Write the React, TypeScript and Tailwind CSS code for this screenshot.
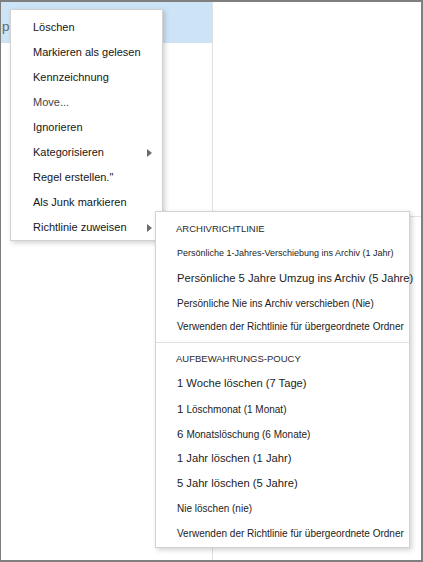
import React from "react";

const Arrow = () => (
  <svg width="5" height="8" viewBox="0 0 5 8" className="block">
    <polygon points="0,0 5,4 0,8" fill="#6b6b6b" />
  </svg>
);

type MainItem = { label: string; arrow?: boolean; muted?: boolean };

const mainItems: MainItem[] = [
  { label: "Löschen" },
  { label: "Markieren als gelesen" },
  { label: "Kennzeichnung" },
  { label: "Move...", muted: true },
  { label: "Ignorieren" },
  { label: "Kategorisieren", arrow: true },
  { label: 'Regel erstellen."' },
  { label: "Als Junk markieren" },
  { label: "Richtlinie zuweisen", arrow: true },
];

export default function App() {
  return (
    <div className="relative w-[423px] h-[562px] bg-white border-t-2 border-l border-r-2 border-b-2 border-[#7f7f7f] flex font-['Liberation_Sans',Arial,sans-serif] overflow-hidden">
      {/* left pane */}
      <div className="w-[212px] h-full border-r border-[#e1e1e1] flex flex-col">
        <div className="h-[41px] bg-[#cde4f7] pl-[1px] pt-[17px]">
          <div className="text-[13.5px] leading-[16px] text-[#666666] whitespace-nowrap">p</div>
        </div>
      </div>
      {/* right pane */}
      <div className="flex-1 h-full flex flex-col">
        <div className="h-[215px] border-b border-[#e3e3e3]" />
      </div>

      {/* main context menu */}
      <div className="absolute left-[9px] top-[7px] w-[153px] h-[232px] bg-white border border-[#d2d2d2] shadow-[2px_2px_5px_rgba(0,0,0,0.18)] pt-[5px]">
        {mainItems.map((it) => (
          <div
            key={it.label}
            className={`h-[25px] flex items-center justify-between pl-[22px] pr-[10px] text-[11px] whitespace-nowrap ${
              it.muted ? "text-[#444444]" : "text-[#161616]"
            }`}
          >
            <span>{it.label}</span>
            {it.arrow ? <Arrow /> : null}
          </div>
        ))}
      </div>

      {/* sub menu */}
      <div className="absolute left-[154px] top-[209px] w-[255px] h-[337px] bg-white border border-[#d2d2d2] shadow-[2px_2px_5px_rgba(0,0,0,0.18)] text-[#1c1c1c] whitespace-nowrap">
        <div className="pt-[5px] pb-[4px]">
          <div className="h-[24px] flex items-center pl-[20px] text-[9.5px] text-[#2a2a2a]">ARCHIVRICHTLINIE</div>
          <div className="h-[25px] flex items-center pl-[21px] text-[9px]">Persönliche 1-Jahres-Verschiebung ins Archiv (1 Jahr)</div>
          <div className="h-[25px] flex items-center pl-[21px] text-[11.2px]">Persönliche 5 Jahre Umzug ins Archiv (5 Jahre)</div>
          <div className="h-[24px] flex items-center pl-[21px] text-[10px]">Persönliche Nie ins Archiv verschieben (Nie)</div>
          <div className="h-[23px] flex items-center pl-[21px] text-[10px]">Verwenden der Richtlinie für übergeordnete Ordner</div>
        </div>
        <div className="h-px bg-[#e2e2e2]" />
        <div className="pt-[5px] pb-[1px]">
          <div className="h-[23px] flex items-center pl-[20px] text-[9.5px] text-[#2a2a2a]">AUFBEWAHRUNGS-POUCY</div>
          <div className="h-[25px] flex items-center pl-[21px] text-[11.2px]">1 Woche löschen (7 Tage)</div>
          <div className="h-[25px] flex items-baseline pl-[21px] pt-[5px] text-[10px]">
            <span className="text-[11.5px] mr-[3px]">1</span>Löschmonat (1 Monat)
          </div>
          <div className="h-[25px] flex items-baseline pl-[21px] pt-[5px] text-[10px]">
            <span className="text-[11.5px] mr-[3px]">6</span>Monatslöschung (6 Monate)
          </div>
          <div className="h-[25px] flex items-center pl-[21px] text-[11.2px]">1 Jahr löschen (1 Jahr)</div>
          <div className="h-[25px] flex items-center pl-[21px] text-[11.2px]">5 Jahr löschen (5 Jahre)</div>
          <div className="h-[25px] flex items-center pl-[21px] text-[10px]">Nie löschen (nie)</div>
          <div className="h-[25px] flex items-center pl-[21px] text-[10px]">Verwenden der Richtlinie für übergeordnete Ordner</div>
        </div>
      </div>
    </div>
  );
}
